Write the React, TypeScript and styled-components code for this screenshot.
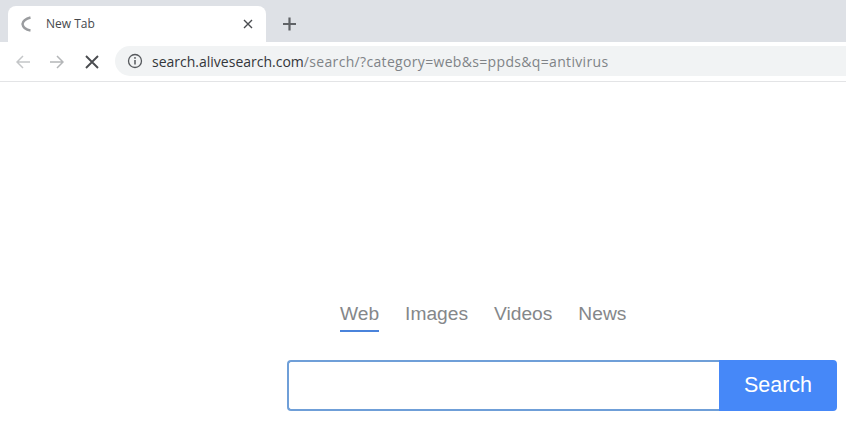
import React from "react";
import styled, { createGlobalStyle } from "styled-components";

const Global = createGlobalStyle`
  html, body { margin: 0; padding: 0; background: #fff; overflow: hidden; }
  #root { width: 846px; height: 431px; overflow: hidden; }
`;
const Page = styled.div`display: flex; flex-direction: column; width: 846px; height: 431px; background: #fff;`;
const TabStrip = styled.div`display: flex; align-items: flex-end; height: 42px; padding-left: 8px; background: #dee1e6; flex: none;`;
const Tab = styled.div`
  display: flex; align-items: center; width: 258px; height: 36px; box-sizing: border-box; padding: 0 13px 0 12px;
  background: #fff; border-radius: 8px 8px 0 0;
`;
const TabTitle = styled.span`flex: 1; margin: 0 0 2px 12px; font: 12px "Open Sans", sans-serif; color: #45484c;`;
const NewTab = styled.div`display: flex; align-items: center; margin: 0 0 0 17px; height: 36px;`;
const Toolbar = styled.div`
  display: flex; align-items: center; height: 40px; box-sizing: border-box; flex: none; padding-left: 16px;
  border-bottom: 1px solid #e3e4e6; background: #fff;
`;
const NavButton = styled.div<{ $gap: number }>`display: flex; margin-right: ${p => p.$gap}px;`;
const AddressBar = styled.div`
  display: flex; align-items: center; flex: 1; height: 30px; margin-right: -20px; padding-left: 12px; margin-bottom: 1px;
  background: #f1f3f4; border-radius: 15px;
`;
const Url = styled.span`margin-left: 9px; font: 14px "Open Sans", sans-serif; color: #7f8387; white-space: nowrap; letter-spacing: 0.33px;`;
const Host = styled.span`color: #33363a; letter-spacing: 0;`;
const Main = styled.main`display: flex; flex-direction: column; align-items: flex-end; flex: 1; padding: 219px 9px 0 0;`;
const SearchColumn = styled.div`display: flex; flex-direction: column; width: 550px;`;
const Nav = styled.nav`display: flex; gap: 26px; padding-left: 53px;`;
const NavItem = styled.a<{ $active?: boolean }>`
  height: 31px; box-sizing: border-box; font: 19.200px/26px "Liberation Sans", Arial, sans-serif; color: #85878a;
  border-bottom: 2px solid ${p => (p.$active ? "#4a83db" : "transparent")};
`;
const SearchRow = styled.div`display: flex; height: 51px; margin-top: 28px;`;
const SearchInput = styled.div`
  flex: 1; box-sizing: border-box; border: 2px solid #6f9fd8; border-right: 0; border-radius: 4px 0 0 4px; background: #fff;
`;
const SearchButton = styled.button`
  width: 118px; padding: 0; border: 0; border-radius: 0 4px 4px 0; background: #4688f8; color: #fff;
  font: 21.500px "Liberation Sans", Arial, sans-serif;
`;

export default function App() {
  return (
    <Page>
      <Global />
      <TabStrip>
        <Tab>
          <svg width="14" height="18" viewBox="0 0 14 18" fill="none">
            <path d="M10.500 2.500C6.500 3.500 3 5.500 2.500 9c.5 3.500 3.500 5.800 8 6.500" stroke="#9a9c9f" strokeWidth="2.400" />
          </svg>
          <TabTitle>New Tab</TabTitle>
          <svg width="10" height="10" viewBox="0 0 10 10" stroke="#4a4c50" strokeWidth="1.400">
            <path d="M1 1l8 8M9 1l-8 8" />
          </svg>
        </Tab>
        <NewTab>
          <svg width="13" height="14" viewBox="0 0 13 14" stroke="#5f6266" strokeWidth="2.200">
            <path d="M6.500 .5v13M0 7h13" />
          </svg>
        </NewTab>
      </TabStrip>
      <Toolbar>
        <NavButton $gap={20}>
          <svg width="14" height="14" viewBox="0 0 14 14" fill="none" stroke="#c4c6c8" strokeWidth="1.500">
            <path d="M14 7H1.200M7 1 1 7l6 6" />
          </svg>
        </NavButton>
        <NavButton $gap={21}>
          <svg width="14" height="14" viewBox="0 0 14 14" fill="none" stroke="#b4b6b8" strokeWidth="1.500">
            <path d="M0 7h12.800M7 1l6 6-6 6" />
          </svg>
        </NavButton>
        <NavButton $gap={16}>
          <svg width="14" height="14" viewBox="0 0 14 14" stroke="#4a4c50" strokeWidth="1.900">
            <path d="M1 1l12 12M13 1 1 13" />
          </svg>
        </NavButton>
        <AddressBar>
          <svg width="16" height="16" viewBox="0 0 16 16" fill="none">
            <circle cx="8" cy="8" r="6.500" stroke="#55585c" strokeWidth="1.300" />
            <path d="M8 7v4.500" stroke="#55585c" strokeWidth="1.500" />
            <circle cx="8" cy="4.900" r="0.900" fill="#55585c" />
          </svg>
          <Url><Host>search.alivesearch.com</Host>/search/?category=web&amp;s=ppds&amp;q=antivirus</Url>
        </AddressBar>
      </Toolbar>
      <Main>
        <SearchColumn>
          <Nav>
            <NavItem $active>Web</NavItem>
            <NavItem>Images</NavItem>
            <NavItem>Videos</NavItem>
            <NavItem>News</NavItem>
          </Nav>
          <SearchRow>
            <SearchInput />
            <SearchButton>Search</SearchButton>
          </SearchRow>
        </SearchColumn>
      </Main>
    </Page>
  );
}
